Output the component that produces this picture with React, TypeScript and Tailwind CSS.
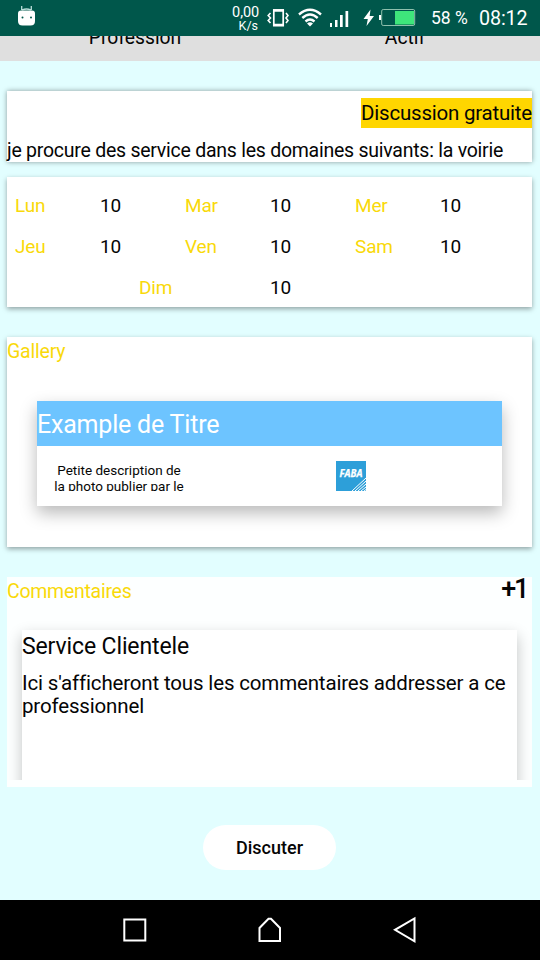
import React from "react";

type Day = { name: string; value: string };

const firstDays: Day[] = [
  { name: "Lun", value: "10" },
  { name: "Mar", value: "10" },
  { name: "Mer", value: "10" },
  { name: "Jeu", value: "10" },
  { name: "Ven", value: "10" },
  { name: "Sam", value: "10" },
];

function StatusBar() {
  return (
    <header className="relative z-10 flex h-9 shrink-0 bg-[#00574b] text-white">
      <svg className="ml-[17px] mt-[5px] h-[22px] w-[19px] shrink-0" viewBox="0 0 19 22" fill="none">
        <path d="M4.700 1v4M14.300 1v4M5 5Q9.500 3 14 5" stroke="#b9dcd8" strokeWidth="1.300" />
        <path d="M4 5.500h11c2 0 3 1 3 3v7.500c0 3-1.500 4.500-4.500 4.500h-8c-3 0-4.500-1.500-4.500-4.500V8.500c0-2 1-3 3-3Z" fill="white" />
        <circle cx="5.500" cy="12.500" r="1" fill="#00574b" />
        <circle cx="14" cy="12.500" r="1" fill="#00574b" />
      </svg>
      <div className="ml-[193px] mt-[6px] w-[30px] text-right text-[14.500px] leading-[13px]">
        <div className="tracking-[-0.1px]">0,00</div>
        <div className="pr-px text-[12.500px]">K/s</div>
      </div>
      <svg className="ml-[8px] mt-[8px] h-[20px] w-[22px] shrink-0" viewBox="0 0 22 20" fill="none" stroke="white">
        <rect x="6.800" y="2" width="9.400" height="15.500" strokeWidth="1.700" />
        <path d="M6 2.500h11M6 17h11" strokeWidth="2.500" />
        <path d="M3.500 5 1.200 7.500 3.500 10 1.200 12.500 3.500 15M19 5l2 2.500-2 2.500 2 2.500-2 2.500" strokeWidth="1.600" />
      </svg>
      <svg className="ml-[9px] mt-[8px] h-[19px] w-[24px] shrink-0" viewBox="0 0 24 19" fill="none" stroke="white" strokeWidth="2.400">
        <path d="M1 6.500Q12 -3 23 6.500M4.300 10Q12 3 19.700 10M7.500 13.500Q12 9.500 16.500 13.500" />
        <path d="m9 15.500 3 3 3-3Q12 13 9 15.500Z" fill="white" stroke="none" />
      </svg>
      <svg className="ml-[8px] mt-[10px] h-[18px] w-[21px] shrink-0" viewBox="0 0 21 18" fill="white">
        <rect x="0" y="13" width="2" height="4" />
        <rect x="5" y="10" width="2.500" height="7" />
        <rect x="10" y="5" width="2.700" height="12" />
        <rect x="15.500" y="1" width="2.700" height="16" />
      </svg>
      <svg className="ml-[12px] mt-[9px] h-[18px] w-[12px] shrink-0" viewBox="0 0 12 18" fill="white">
        <path d="M7.500.500.500 10h4.300L3.500 17 11 7H6.700Z" />
      </svg>
      <svg className="ml-[4px] mt-[8px] h-[19px] w-[38px] shrink-0" viewBox="0 0 38 19">
        <rect x="0" y="7" width="2" height="5" fill="white" />
        <rect x="2.700" y="1.500" width="33" height="16" rx="1.500" fill="none" stroke="#8fc0ad" strokeWidth="1" />
        <rect x="16" y="3" width="19" height="13.500" fill="#3ee67b" />
      </svg>
      <div className="ml-[14px] h-9 w-[48px] whitespace-nowrap text-[17.500px] leading-[37px]">58 %</div>
      <div className="h-9 whitespace-nowrap text-[19.700px] leading-[37px] tracking-[-0.1px]">08:12</div>
    </header>
  );
}

function Gallery() {
  return (
    <section className="ml-[7px] mr-[8px] mt-[30px] h-[210px] shrink-0 bg-white shadow-[0_2px_5px_rgba(0,0,0,0.36)]">
      <h2 className="h-[30px] text-[19.500px] leading-[30px] tracking-[-0.2px] text-[#f9d90a]">Gallery</h2>
      <article className="mx-[30px] mt-[34px] h-[105px] bg-white shadow-[0_7px_16px_rgba(0,0,0,0.28)]">
        <h3 className="h-[45px] bg-[#6dc4ff] text-[25px] leading-[48px] tracking-[-0.2px] text-white">Example de Titre</h3>
        <div className="flex">
          <p className="ml-[7px] mt-[16px] h-[29px] w-[150px] overflow-hidden text-center text-[13.500px] leading-[16px]">
            Petite description de<br />la photo publier par le
          </p>
          <svg className="ml-[142px] mt-[15px] h-[30px] w-[30px]" viewBox="0 0 30 30">
            <path d="M0 0h30v30H0Z" fill="#2d9fd9" />
            <path d="m16 30 14-13M19 30l11-10M22 30l8-7M25 30l5-4M28 30l2-1.500" stroke="white" strokeWidth="1" />
            <text x="3.500" y="16.300" fill="white" stroke="white" strokeWidth="0.250" fontFamily="Open Sans" fontSize="10" fontWeight="700" fontStyle="italic" textLength="23" lengthAdjust="spacingAndGlyphs">FABA</text>
          </svg>
        </div>
      </article>
    </section>
  );
}

function Comments() {
  return (
    <section className="ml-[7px] mr-[8px] mt-[30px] h-[210px] shrink-0 bg-[#fdffff]">
      <div className="flex h-[43px] justify-between">
        <h2 className="text-[19.500px] leading-[29px] tracking-[-0.270px] text-[#f9d90a]">Commentaires</h2>
        <span className="mr-[5px] text-[27px] font-medium leading-[25px] tracking-[-2.300px]">+1</span>
      </div>
      <div className="h-[160px] overflow-hidden px-[15px] pt-[10px]">
        <article className="h-[200px] bg-white shadow-[0_6px_14px_rgba(0,0,0,0.24)]">
          <h3 className="h-[34px] text-[23px] leading-[34px] tracking-[-0.120px]">Service Clientele</h3>
          <p className="whitespace-nowrap pt-[8px] text-[20.500px] leading-[23px] tracking-[-0.160px]">
            Ici s'afficheront tous les commentaires addresser a ce<br />professionnel
          </p>
        </article>
      </div>
    </section>
  );
}

function NavigationBar() {
  return (
    <nav className="mt-auto flex h-[60px] shrink-0 items-center justify-center gap-[107px] bg-black">
      <svg className="h-[28px] w-[28px]" viewBox="0 0 28 28" fill="none" stroke="white" strokeWidth="2">
        <path d="M3.300 3.500h21v21h-21Z" />
      </svg>
      <svg className="h-[28px] w-[28px]" viewBox="0 0 28 28" fill="none" stroke="white" strokeWidth="2">
        <path d="M3.500 25V12l9-9.300H15l9 9.300v13Z" />
      </svg>
      <svg className="h-[28px] w-[28px]" viewBox="0 0 28 28" fill="none" stroke="white" strokeWidth="2">
        <path d="M23.500 2.500v22.800L4 13.800Z" />
      </svg>
    </nav>
  );
}

export default function App() {
  return (
    <div className="flex h-[960px] w-[540px] flex-col overflow-hidden bg-[#e2feff] font-[Roboto,sans-serif] text-[#050505]">
      <StatusBar />
      <div className="flex h-[25px] shrink-0 items-start overflow-hidden bg-[#dfdfdf] text-[19.300px] leading-[20px]">
        <div className="-mt-[8px] w-1/2 text-center">Profession</div>
        <div className="-mt-[8px] w-1/2 text-center">Actif</div>
      </div>
      <section className="ml-[7px] mr-[8px] mt-[30px] flex h-[71px] shrink-0 flex-col bg-white shadow-[0_0_5px_rgba(0,0,0,0.4)]">
        <span className="mt-[7px] h-[30px] self-end whitespace-nowrap bg-[#ffd600] text-[20.500px] leading-[30px] tracking-[-0.220px]">Discussion gratuite</span>
        <p className="whitespace-nowrap text-[19.500px] leading-[45px] tracking-[-0.250px]">je procure des service dans les domaines suivants: la voirie</p>
      </section>
      <section className="ml-[7px] mr-[8px] mt-[15px] h-[130px] shrink-0 bg-white pt-[9px] text-[19px] leading-[40.800px] tracking-[-0.150px] shadow-[0_2px_5px_rgba(0,0,0,0.36)]">
        <div className="grid grid-cols-[170px_170px_170px] pl-[8px]">
          {firstDays.map((day) => (
            <div className="flex" key={day.name}>
              <span className="w-[85px] text-[#f9d90a]">{day.name}</span>
              <span>{day.value}</span>
            </div>
          ))}
        </div>
        <div className="flex pl-[132px]">
          <span className="w-[131px] text-[#f9d90a]">Dim</span>
          <span>10</span>
        </div>
      </section>
      <Gallery />
      <Comments />
      <button className="ml-[203px] mt-[38px] h-[45px] w-[133px] shrink-0 rounded-full bg-white text-[18px] font-medium leading-[45px]">Discuter</button>
      <NavigationBar />
    </div>
  );
}
